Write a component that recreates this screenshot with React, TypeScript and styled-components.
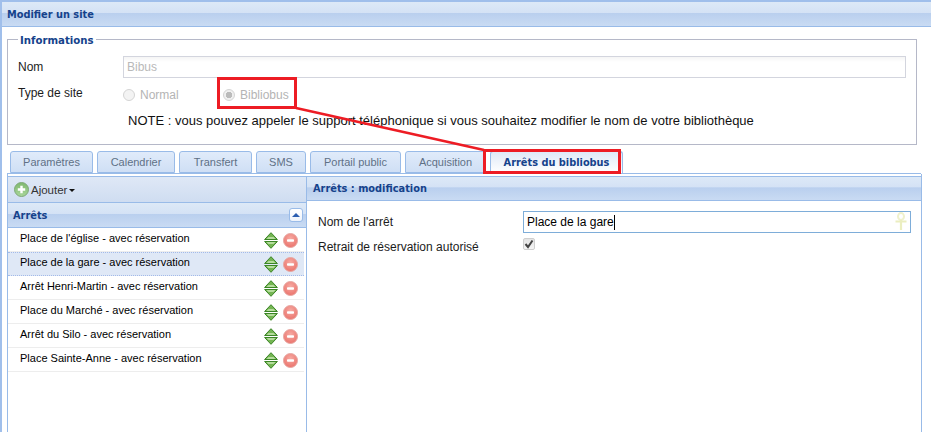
import React from 'react'
import styled, { createGlobalStyle } from 'styled-components'

const GlobalStyle = createGlobalStyle`
  html, body {
    margin: 0;
    padding: 0;
    background: #fff;
  }
  * {
    box-sizing: border-box;
  }
`

const uiFont = `'Liberation Sans', Arial, sans-serif`
const titleFont = `'DejaVu Sans', Verdana, sans-serif`

const Page = styled.div`
  background: #fff;
  border-left: 2px solid #a0bfeb;
  border-top: 2px solid #a0bfeb;
  color: #1c1c1c;
  font-family: ${uiFont};
  font-size: 12px;
  height: 432px;
  overflow: hidden;
  position: relative;
  width: 931px;
`

const PanelHeader = styled.div<{ $height: number }>`
  align-items: center;
  background: linear-gradient(#dde9f7 0, #d4e2f5 45%, #b9cfee 46%, #c9dbf3 100%);
  border-bottom: 1px solid #99bbe8;
  color: #15428b;
  display: flex;
  font-family: ${titleFont};
  font-size: 9.8px;
  font-weight: 700;
  height: ${(props) => props.$height}px;
  padding-left: 5px;
`

const Informations = styled.fieldset`
  border: 1px solid #b5b8c8;
  height: 114px;
  margin: 4px 0 0 5px;
  padding: 7px 9px 0 10px;
  width: 910px;
`

const Legend = styled.legend`
  color: #15428b;
  font-family: ${titleFont};
  font-size: 10.2px;
  font-weight: 700;
  line-height: 12px;
  padding: 4px 2px 0;
`

const FormRow = styled.div`
  align-items: center;
  display: flex;
  height: 26px;
`

const FieldLabel = styled.span`
  width: 105px;
`

const DisabledInput = styled.div`
  background: linear-gradient(#f5f5f5, #fff 5px);
  border: 1px solid #d3d5de;
  color: #b9b9b9;
  height: 22px;
  line-height: 20px;
  padding-left: 3px;
  width: 783px;
`

const RadioLabel = styled.label<{ $width: number }>`
  align-items: center;
  color: #b4b4b4;
  display: flex;
  gap: 5px;
  margin-top: 4px;
  width: ${(props) => props.$width}px;
`

const RadioDot = styled.span<{ $checked?: boolean }>`
  background: ${(props) => (props.$checked ? 'radial-gradient(circle, #bbb 0, #bbb 3px, #f0f0f0 3.5px)' : '#f3f3f3')};
  border: 1px solid #d4d4d4;
  border-radius: 50%;
  display: block;
  height: 12px;
  width: 12px;
`

const Note = styled.div`
  color: #111;
  font-size: 13px;
  margin-left: 110px;
  margin-top: 7px;
`

const TabBar = styled.div`
  border-bottom: 1px solid #99bbe8;
  display: flex;
  gap: 4px;
  height: 23px;
  margin: 6px 0 0 5px;
  padding-left: 3px;
  width: 914px;
`

const Tab = styled.div<{ $width: number; $active?: boolean }>`
  align-items: center;
  background: ${(props) =>
    props.$active ? 'linear-gradient(#dfe9f7, #fff)' : 'linear-gradient(#e0ebfa, #cfdff5)'};
  border: 1px solid #99bbe8;
  border-bottom: ${(props) => (props.$active ? 'none' : '1px solid #99bbe8')};
  border-radius: 3px 3px 0 0;
  color: ${(props) => (props.$active ? '#15428b' : '#5f7186')};
  display: flex;
  font-family: ${(props) => (props.$active ? titleFont : 'inherit')};
  font-size: ${(props) => (props.$active ? '9.8px' : '11px')};
  font-weight: ${(props) => (props.$active ? 700 : 400)};
  height: 22px;
  justify-content: center;
  width: ${(props) => props.$width}px;
`

const Workspace = styled.div`
  border-left: 1px solid #99bbe8;
  border-right: 1px solid #99bbe8;
  display: flex;
  height: 260px;
  margin-left: 5px;
  padding-top: 2px;
  width: 915px;
`

const WestPanel = styled.div`
  border-right: 1px solid #99bbe8;
  width: 299px;
`

const Toolbar = styled.div`
  align-items: center;
  background: linear-gradient(#dfe8f6, #cfddf1);
  border-bottom: 1px solid #99bbe8;
  border-top: 1px solid #99bbe8;
  color: #333;
  display: flex;
  font-size: 11.5px;
  gap: 2px;
  height: 27px;
  padding-left: 6px;
`

const Caret = styled.span`
  border-left: 3px solid transparent;
  border-right: 3px solid transparent;
  border-top: 3px solid #111;
  margin-top: 2px;
`

const ListHeader = styled(PanelHeader)`
  justify-content: space-between;
  padding-left: 5px;
  padding-right: 3px;
`

const CollapseButton = styled.button`
  align-items: center;
  background: linear-gradient(#fff, #eef3fb);
  border: 1px solid #99bbe8;
  border-radius: 3px;
  display: flex;
  height: 14px;
  justify-content: center;
  padding: 0;
  width: 14px;
`

const UpArrow = styled.span`
  border-bottom: 4px solid #2a5db0;
  border-left: 4px solid transparent;
  border-right: 4px solid transparent;
`

const StopRow = styled.div<{ $selected?: boolean }>`
  align-items: center;
  background: ${(props) => (props.$selected ? '#dfe8f6' : '#fff')};
  border-bottom: 1px ${(props) => (props.$selected ? 'dotted #a3bae9' : 'solid #ededed')};
  border-top: 1px ${(props) => (props.$selected ? 'dotted #a3bae9' : 'solid transparent')};
  color: #000;
  display: flex;
  font-size: 11px;
  height: 24px;
  margin-right: 2px;
  padding-left: 12px;
`

const StopName = styled.span`
  flex: 1;
  margin-bottom: 4px;
`

const StopActions = styled.span`
  align-items: center;
  display: flex;
  gap: 5px;
  margin-right: 6px;
`

const CenterPanel = styled.div`
  flex: 1;
`

const CenterHeader = styled(PanelHeader)`
  border-top: 1px solid #99bbe8;
  padding-left: 6px;
`

const EditForm = styled.div`
  padding: 9px 10px 0 11px;
`

const EditRow = styled.div<{ $height: number }>`
  align-items: center;
  display: flex;
  height: ${(props) => props.$height}px;
`

const EditLabel = styled.span`
  width: 205px;
`

const NameInput = styled.div`
  align-items: center;
  border: 1px solid #7eadd9;
  color: #000;
  display: flex;
  height: 22px;
  padding-left: 3px;
  position: relative;
  width: 388px;
`

const TextCaret = styled.span`
  background: #000;
  height: 15px;
  width: 1px;
`

const AnkhMark = styled.svg`
  position: absolute;
  right: 3px;
  top: 0;
`

const CheckBox = styled.span`
  align-items: center;
  background: linear-gradient(#e4e4e4, #f4f4f4);
  border: 1px solid #cfcfcf;
  border-radius: 2px;
  display: flex;
  height: 12px;
  justify-content: center;
  margin-top: -6px;
  width: 12px;
`

const RedFrame = styled.div`
  border: 3px solid #ed1c24;
  pointer-events: none;
  position: absolute;
`

const FrameRadio = styled(RedFrame)`
  height: 32px;
  left: 215px;
  top: 75px;
  width: 80px;
`

const FrameTab = styled(RedFrame)`
  height: 25px;
  left: 481px;
  top: 147px;
  width: 138px;
`

const Connector = styled.svg`
  left: -2px;
  pointer-events: none;
  position: absolute;
  top: -2px;
`

const PlusIcon = () => (
  <svg width="15" height="15" viewBox="0 0 15 15">
    <defs>
      <linearGradient id="plusFill" x1="0" y1="0" x2="0" y2="1">
        <stop offset="0" stopColor="#7fb86e" />
        <stop offset="1" stopColor="#a8d69a" />
      </linearGradient>
    </defs>
    <circle cx="7.5" cy="7.5" r="7" fill="url(#plusFill)" stroke="#7fa878" />
    <path d="M7.5 3.8v7.4M3.8 7.5h7.4" stroke="#fff" strokeWidth="2.4" />
  </svg>
)

const MoveIcon = () => (
  <svg width="14" height="17" viewBox="0 0 14 17">
    <path d="M7 .7 13.4 7.5H.6z" fill="#74b552" stroke="#3b8526" strokeWidth="1" />
    <path d="M.6 9.5h12.8L7 16.3z" fill="#74b552" stroke="#3b8526" strokeWidth="1" />
    <path d="M2.5 7h9L9.5 5h-5z" fill="#b5dc9d" />
    <path d="M2.5 10h9L9.5 12h-5z" fill="#b5dc9d" />
  </svg>
)

const RemoveIcon = () => (
  <svg width="15" height="15" viewBox="0 0 15 15">
    <defs>
      <radialGradient id="removeFill" cx="0.5" cy="0.35" r="0.7">
        <stop offset="0" stopColor="#f6aaa3" />
        <stop offset="1" stopColor="#ea6f67" />
      </radialGradient>
    </defs>
    <circle cx="7.5" cy="7.5" r="7" fill="url(#removeFill)" stroke="#e7a7a2" />
    <rect x="4" y="6.3" width="7" height="2.4" rx="0.8" fill="#fff" />
  </svg>
)

const tabs = [
  { name: 'Paramètres', width: 83 },
  { name: 'Calendrier', width: 78 },
  { name: 'Transfert', width: 73 },
  { name: 'SMS', width: 50 },
  { name: 'Portail public', width: 91 },
  { name: 'Acquisition', width: 81 },
  { name: 'Arrêts du bibliobus', width: 133, active: true },
]

const stops = [
  "Place de l'église",
  'Place de la gare',
  'Arrêt Henri-Martin',
  'Place du Marché',
  'Arrêt du Silo',
  'Place Sainte-Anne',
]

export default function App() {
  return (
    <>
      <GlobalStyle />
      <Page>
        <PanelHeader $height={25}>Modifier un site</PanelHeader>
        <Informations>
          <Legend>Informations</Legend>
          <FormRow>
            <FieldLabel>Nom</FieldLabel>
            <DisabledInput>Bibus</DisabledInput>
          </FormRow>
          <FormRow>
            <FieldLabel>Type de site</FieldLabel>
            <RadioLabel $width={100}>
              <RadioDot />
              Normal
            </RadioLabel>
            <RadioLabel $width={100}>
              <RadioDot $checked />
              Bibliobus
            </RadioLabel>
          </FormRow>
          <Note>NOTE : vous pouvez appeler le support téléphonique si vous souhaitez modifier le nom de votre bibliothèque</Note>
        </Informations>
        <TabBar>
          {tabs.map((tab) => (
            <Tab key={tab.name} $width={tab.width} $active={tab.active}>
              {tab.name}
            </Tab>
          ))}
        </TabBar>
        <Workspace>
          <WestPanel>
            <Toolbar>
              <PlusIcon />
              Ajouter
              <Caret />
            </Toolbar>
            <ListHeader $height={25}>
              Arrêts
              <CollapseButton>
                <UpArrow />
              </CollapseButton>
            </ListHeader>
            {stops.map((stop, index) => (
              <StopRow key={stop} $selected={index === 1}>
                <StopName>{stop} - avec réservation</StopName>
                <StopActions>
                  <MoveIcon />
                  <RemoveIcon />
                </StopActions>
              </StopRow>
            ))}
          </WestPanel>
          <CenterPanel>
            <CenterHeader $height={25}>Arrêts : modification</CenterHeader>
            <EditForm>
              <EditRow $height={24}>
                <EditLabel>Nom de l'arrêt</EditLabel>
                <NameInput>
                  Place de la gare
                  <TextCaret />
                  <AnkhMark width="12" height="20" viewBox="0 0 12 20">
                    <ellipse cx="6" cy="4.5" rx="3" ry="3.4" fill="none" stroke="#eff1cc" strokeWidth="2" />
                    <path d="M.5 9.5h11M6 8v10" stroke="#ebeec0" strokeWidth="2.2" />
                  </AnkhMark>
                </NameInput>
              </EditRow>
              <EditRow $height={26}>
                <EditLabel>Retrait de réservation autorisé</EditLabel>
                <CheckBox>
                  <svg width="10" height="10" viewBox="0 0 10 10">
                    <path d="M1.5 5 4 8 8.5 1.5" fill="none" stroke="#444" strokeWidth="2" />
                  </svg>
                </CheckBox>
              </EditRow>
            </EditForm>
          </CenterPanel>
        </Workspace>
        <Connector width="931" height="432">
          <path d="M296 108 484 150" stroke="#ed1c24" strokeWidth="2.5" fill="none" />
        </Connector>
        <FrameRadio />
        <FrameTab />
      </Page>
    </>
  )
}
